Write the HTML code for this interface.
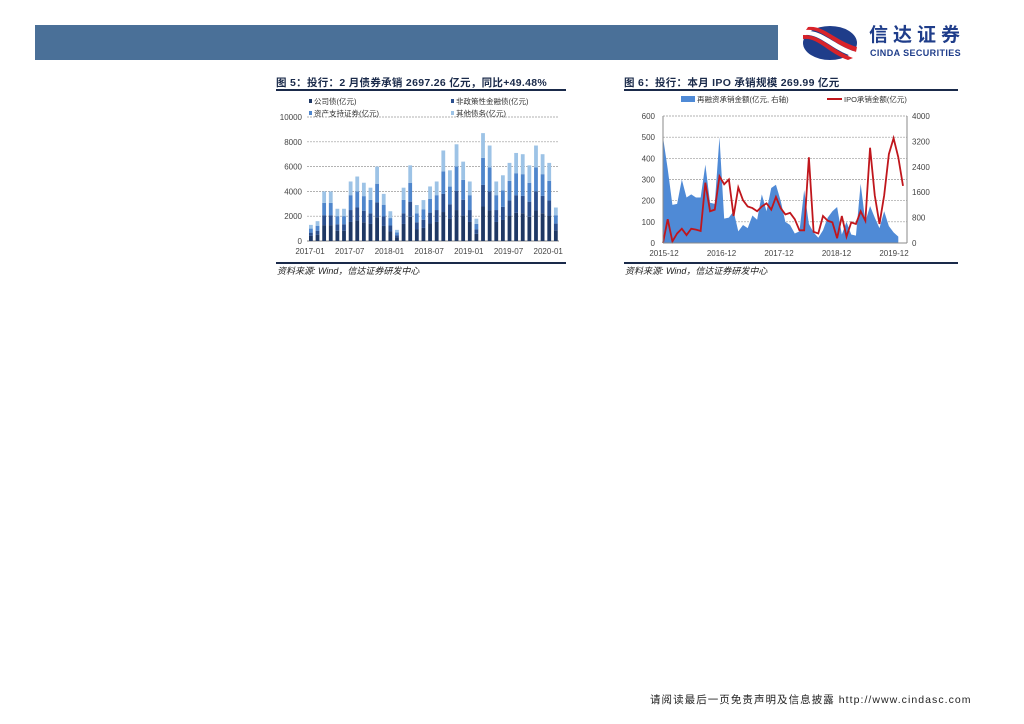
<!DOCTYPE html>
<html><head><meta charset="utf-8">
<style>
body{margin:0;width:1024px;height:724px;background:#fff;position:relative;overflow:hidden;font-family:"Liberation Sans","Noto Sans CJK SC",sans-serif}
.hdr{position:absolute;left:35px;top:25px;width:743px;height:35px;background:#4a7098}
.t{position:absolute;font-size:10.5px;font-weight:bold;color:#1a2a4a;white-space:nowrap}
.ln{position:absolute;height:2px;background:#1a2a4a}
.src{position:absolute;font-size:9px;font-style:italic;color:#222;white-space:nowrap}
svg text{font-family:"Liberation Sans","Noto Sans CJK SC",sans-serif}
</style></head><body>
<div class="hdr"></div>
<svg style="position:absolute;left:800px;top:24px" width="60" height="38" viewBox="0 0 60 38">
<ellipse cx="30" cy="19" rx="27" ry="17" fill="#1f3d8a"/>
<path d="M6 6 C22 4 32 20 56 28 L57 23 C34 16 24 1 8 3Z" fill="#d8232a"/>
<path d="M3 11 C20 9 30 25 54 33 L56 28 C32 20 22 5 4 7Z" fill="#fff"/>
<path d="M3 15 C18 13 28 29 48 36 L53 34 C30 25 20 10 3 11Z" fill="#d8232a"/>
</svg>
<div style="position:absolute;left:869px;top:25px;font-size:19px;line-height:22px;font-weight:bold;color:#1f3d8a;letter-spacing:5px">信达证券</div>
<div style="position:absolute;left:870px;top:48px;font-size:9px;line-height:10px;font-weight:bold;color:#1f3d8a;letter-spacing:0.4px">CINDA SECURITIES</div>

<div class="t" style="left:276px;top:75px;letter-spacing:0.3px">图 5：投行：2 月债券承销 2697.26 亿元，同比+49.48%</div>
<div class="ln" style="left:276px;top:89px;width:290px"></div>
<svg id="c1" style="position:absolute;left:276px;top:92px" width="292" height="170"></svg>
<div class="ln" style="left:276px;top:262px;width:290px;height:1.5px"></div>
<div class="src" style="left:277px;top:264px">资料来源: Wind，信达证券研发中心</div>

<div class="t" style="left:624px;top:75px;letter-spacing:0.3px">图 6：投行：本月 IPO 承销规模 269.99 亿元</div>
<div class="ln" style="left:624px;top:89px;width:334px"></div>
<svg id="c2" style="position:absolute;left:624px;top:92px" width="336" height="170"></svg>
<div class="ln" style="left:624px;top:262px;width:334px;height:1.5px"></div>
<div class="src" style="left:625px;top:264px">资料来源: Wind，信达证券研发中心</div>

<div style="position:absolute;left:650px;top:692px;font-size:10.5px;color:#222;white-space:nowrap;letter-spacing:1.05px">请阅读最后一页免责声明及信息披露 http://www.cindasc.com</div>
<script>
var NS="http://www.w3.org/2000/svg";
function el(s,t,a,tx){var e=document.createElementNS(NS,t);for(var k in a)e.setAttribute(k,a[k]);if(tx)e.textContent=tx;s.appendChild(e);return e}
var s=document.getElementById('c1');
var y0=149,h=124;
[0,2000,4000,6000,8000,10000].forEach(function(v,i){var y=y0-v/10000*h;
 if(v)el(s,'line',{x1:31,x2:283,y1:y,y2:y,stroke:'#999','stroke-dasharray':'2,1','stroke-width':0.7});
 el(s,'text',{x:26,y:y+3,'font-size':8,'text-anchor':'end',fill:'#444'},String(v));});
el(s,'line',{x1:31,x2:283,y1:y0,y2:y0,stroke:'#888'});
var tot=[1300,1600,4000,4000,2600,2600,4800,5200,4700,4300,6000,3800,2400,900,4300,6100,2900,3300,4400,4800,7300,5700,7800,6400,4800,1800,8700,7700,4800,5300,6300,7100,7000,6100,7700,7000,6300,2700];
var cols=['#1f3864','#2b4f8e','#4f86cc','#9dc3e6'],fr=[0.32,0.2,0.25,0.23];
tot.forEach(function(v,i){var x=33+i*6.62,y=y0;fr.forEach(function(f,j){var hh=v*f/10000*h;el(s,'rect',{x:x,y:y-hh,width:3.8,height:hh,fill:cols[j]});y-=hh;});});
['2017-01','2017-07','2018-01','2018-07','2019-01','2019-07','2020-01'].forEach(function(l,i){el(s,'text',{x:34+i*39.7,y:162,'font-size':8,'text-anchor':'middle',fill:'#444'},l)});
[['公司债(亿元)',38,12,0],['非政策性金融债(亿元)',180,12,1],['资产支持证券(亿元)',38,24,2],['其他债务(亿元)',180,24,3]].forEach(function(a){el(s,'rect',{x:a[1]-5,y:a[2]-5,width:3,height:4,fill:cols[a[3]]});el(s,'text',{x:a[1],y:a[2],'font-size':7.5,fill:'#333'},a[0])});
var s2=document.getElementById('c2');var b=151,H=127;
for(var i=0;i<=6;i++){var y=b-i*H/6;if(i)el(s2,'line',{x1:39,x2:283,y1:y,y2:y,stroke:'#999','stroke-dasharray':'2,1','stroke-width':0.7});
 el(s2,'text',{x:31,y:y+3,'font-size':8,'text-anchor':'end',fill:'#444'},String(i*100));}
for(var i=0;i<=5;i++){var y=b-i*H/5;el(s2,'text',{x:288,y:y+3,'font-size':8,fill:'#444'},String(i*800));}
var A=[500,350,180,185,300,215,230,215,215,370,190,185,500,115,120,150,55,85,70,130,110,230,150,260,275,200,100,85,45,55,250,90,50,25,60,120,150,170,40,100,40,35,280,100,175,120,70,150,80,50,30];
var L=[0,750,50,300,450,250,450,420,380,1900,1000,1050,2100,1850,2000,850,1750,1350,1150,1100,1000,1150,1250,1050,1450,1100,900,950,750,400,400,2700,350,300,850,700,650,150,850,200,650,600,1000,700,3000,1500,600,1500,2800,3300,2700,1800];
var st=240/(L.length-1);
var p='39,'+b;A.forEach(function(v,i){p+=' '+(39+i*st)+','+(b-v/600*H)});p+=' '+(39+(A.length-1)*st)+','+b;
el(s2,'polygon',{points:p,fill:'#4f8ad6'});
var q=[];L.forEach(function(v,i){q.push((39+i*st)+','+(b-v/4000*H))});
el(s2,'polyline',{points:q.join(' '),fill:'none',stroke:'#c0161c','stroke-width':1.8});
el(s2,'line',{x1:39,x2:39,y1:b-H,y2:b,stroke:'#888'});el(s2,'line',{x1:283,x2:283,y1:b-H,y2:b,stroke:'#888'});
el(s2,'line',{x1:39,x2:283,y1:b,y2:b,stroke:'#888'});
['2015-12','2016-12','2017-12','2018-12','2019-12'].forEach(function(l,i){el(s2,'text',{x:40+i*57.5,y:164,'font-size':8,'text-anchor':'middle',fill:'#444'},l)});
el(s2,'rect',{x:57,y:4,width:14,height:6,fill:'#4f8ad6'});el(s2,'text',{x:73,y:10,'font-size':7.5,fill:'#333'},'再融资承销金额(亿元, 右轴)');
el(s2,'line',{x1:203,x2:218,y1:7,y2:7,stroke:'#c0161c','stroke-width':2});el(s2,'text',{x:220,y:10,'font-size':7.5,fill:'#333'},'IPO承销金额(亿元)');
</script>
</body></html>
